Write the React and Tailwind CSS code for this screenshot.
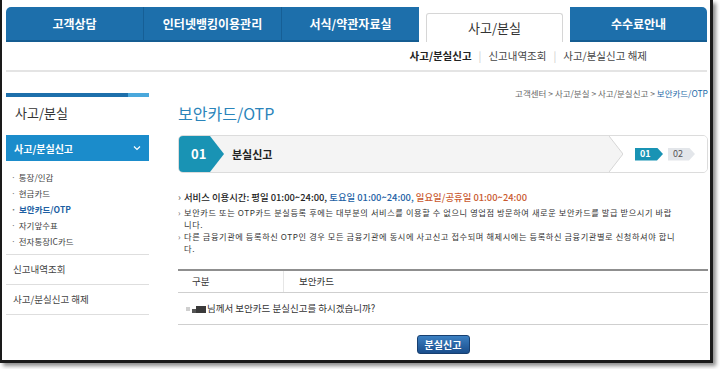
import React from "react";

const tabs = ["고객상담", "인터넷뱅킹이용관리", "서식/약관자료실", "사고/분실", "수수료안내"];
const subItems = ["통장/인감", "현금카드", "보안카드/OTP", "자기앞수표", "전자통장IC카드"];

const App = () => {
  return (
    <div className="w-[720px] h-[369px] bg-white overflow-hidden font-['Noto_Sans_CJK_KR',sans-serif] text-[#333]">
      <div className="w-[713px] h-[363px] bg-white border-l-2 border-r-[3px] border-b-[3px] border-[#1a1a1a] shadow-[3px_3px_4px_rgba(0,0,0,0.45)]">
        {/* top tabs */}
        <div className="ml-[4px] mr-[3px] pt-[7px]">
          <div className="flex h-[35px]">
            {tabs.map((t, i) =>
              t === "사고/분실" ? (
                <div key={t} className="flex-1 bg-white px-[7px] pt-[6px]">
                  <div className="h-full border border-b-0 border-[#d6d6d6] rounded-t-[3px] flex items-center justify-center text-[13px] text-[#333]">
                    {t}
                  </div>
                </div>
              ) : (
                <div
                  key={t}
                  className={`flex-1 flex items-center justify-center bg-[#1d6fab] border-b-2 border-[#155d92] text-white text-[12px] font-semibold ${
                    i === 0 ? "rounded-tl-[5px]" : ""
                  } ${i === tabs.length - 1 ? "rounded-tr-[5px]" : ""} ${
                    i < 2 ? "border-r border-r-[#165f96]" : ""
                  }`}
                >
                  {t}
                </div>
              )
            )}
          </div>

          {/* sub nav */}
          <div className="h-[30px] flex items-center justify-end pr-[60px] border-b-2 border-[#e4e4e4] text-[10.5px] text-[#444]">
            <span className="font-bold text-[#222]">사고/분실신고</span>
            <span className="mx-[7px] text-[#ccc]">|</span>
            <span>신고내역조회</span>
            <span className="mx-[7px] text-[#ccc]">|</span>
            <span>사고/분실신고 해제</span>
          </div>
        </div>

        <div className="flex">
          {/* sidebar */}
          <div className="w-[143px] ml-[4px] mt-[21px]">
            <div className="flex h-[4px]">
              <div className="w-[122px] bg-[#1d6fab]"></div>
              <div className="flex-1 bg-[#4aa8dc]"></div>
            </div>
            <div className="mt-[6px] h-[20px] leading-[20px] pl-[9px] text-[13px] text-[#333]">사고/분실</div>
            <div className="mt-[12px] h-[26px] bg-[#1b8ccb] flex items-center justify-between pl-[8px] pr-[8px] text-white text-[10px] font-bold">
              <span>사고/분실신고</span>
              <svg width="8" height="6" viewBox="0 0 8 6">
                <polyline points="1,1.5 4,4.5 7,1.5" fill="none" stroke="white" strokeWidth="1.2" />
              </svg>
            </div>
            <div className="mt-[8px] pl-[5px] pb-[5px] border-b border-[#dedede]">
              {subItems.map((s) => (
                <div
                  key={s}
                  className={`h-[16px] flex items-center text-[8.5px] ${
                    s === "보안카드/OTP" ? "text-[#1e5fa3] font-bold" : "text-[#444]"
                  }`}
                >
                  <span className="text-[#777] mr-[3px]">·</span>
                  {s}
                </div>
              ))}
            </div>
            <div className="h-[30px] flex items-center pl-[7px] border-b border-[#dedede] text-[9.5px] text-[#444]">신고내역조회</div>
            <div className="h-[30px] flex items-center pl-[7px] border-b border-[#dedede] text-[9.5px] text-[#444]">사고/분실신고 해제</div>
          </div>

          {/* main */}
          <div className="w-[530px] ml-[29px] mt-[15px]">
            <div className="h-[12px] leading-[12px] text-right text-[8.5px] text-[#666] whitespace-nowrap">
              고객센터 &gt; 사고/분실 &gt; 사고/분실신고 &gt; <span className="text-[#1e6aa8]">보안카드/OTP</span>
            </div>
            <div className="mt-[3px] h-[22px] leading-[22px] text-[16px] text-[#2a84ba]">보안카드/OTP</div>

            {/* step box */}
            <div className="mt-[11px] h-[38px] flex rounded-[5px] border border-[#dcdcdc] bg-[#f4f4f4] overflow-hidden">
              <div className="w-[45px] h-full bg-[#1993b4] [clip-path:polygon(0_0,31px_0,45px_50%,31px_100%,0_100%)] flex items-center pl-[12px] text-white text-[13px] font-semibold">
                01
              </div>
              <div className="flex-1 flex items-center pl-[8px] text-[11px] font-bold text-[#222]">분실신고</div>
              <svg width="14" height="36" viewBox="0 0 14 36" preserveAspectRatio="none" className="bg-white">
                <polygon points="0,0 14,18 0,36" fill="#f4f4f4" />
                <polyline points="0,0 14,18 0,36" fill="none" stroke="#d6d6d6" strokeWidth="1" />
              </svg>
              <div className="w-[84px] bg-white flex items-center pl-[12px] gap-[5px]">
                <div className="w-[28px] h-[13px] bg-[#1993b4] [clip-path:polygon(0_0,22px_0,28px_50%,22px_100%,0_100%)] flex items-center pl-[5px] text-white text-[9px] font-semibold">
                  01
                </div>
                <div className="w-[27px] h-[13px] bg-[#e3e6ea] [clip-path:polygon(0_0,21px_0,27px_50%,21px_100%,0_100%)] flex items-center pl-[5px] text-[#555] text-[9px]">
                  02
                </div>
              </div>
            </div>

            {/* notes */}
            <div className="mt-[18px] h-[12px] leading-[12px] text-[9.4px] font-medium whitespace-nowrap">
              <span className="text-[#666] mr-[3px]">›</span>
              <span className="text-[#222]">서비스 이용시간: 평일 01:00~24:00, </span>
              <span className="text-[#1c5fa5]">토요일 01:00~24:00, </span>
              <span className="text-[#c9592e]">일요일/공휴일 01:00~24:00</span>
            </div>
            <div className="mt-[3px] text-[8.2px] leading-[12px] tracking-[0.6px] text-[#333] whitespace-nowrap">
              <div className="flex">
                <span className="text-[#666] mr-[3px]">›</span>
                <div>
                  보안카드 또는 OTP카드 분실등록 후에는 대부분의 서비스를 이용할 수 없으니 영업점 방문하여 새로운 보안카드를 발급 받으시기 바랍
                  <br />
                  니다.
                </div>
              </div>
              <div className="flex">
                <span className="text-[#666] mr-[3px]">›</span>
                <div>
                  다른 금융기관에 등록하신 OTP인 경우 모든 금융기관에 동시에 사고신고 접수되며 해제시에는 등록하신 금융기관별로 신청하셔야 합니
                  <br />
                  다.
                </div>
              </div>
            </div>

            {/* table */}
            <div className="mt-[15px] border-t-2 border-[#8f8f8f] text-[9.5px] text-[#333]">
              <div className="h-[22px] flex border-b border-[#cfcfcf]">
                <div className="w-[105px] flex items-center pl-[14px]">구분</div>
                <div className="flex-1 flex items-center pl-[15px] border-l border-[#e6e6e6]">보안카드</div>
              </div>
              <div className="h-[32px] flex items-center pl-[8px] border-b border-[#cfcfcf]">
                <span className="w-[4px] h-[4px] bg-[#cfcfcf] mr-[2px]"></span>
                <span className="flex items-end h-[8px] mr-[1px]">
                  <span className="w-[4px] h-[4px] bg-[#555]"></span>
                  <span className="w-[10px] h-[7px] bg-[#3a3a3a]"></span>
                </span>
                님께서 보안카드 분실신고를 하시겠습니까?
              </div>
            </div>
            <div className="mt-[10px] flex justify-center">
              <div className="w-[53px] h-[19px] rounded-[3px] bg-linear-to-b from-[#3c80c2] to-[#1a4e8c] border border-[#173f70] text-white text-[10px] font-bold flex items-center justify-center">
                분실신고
              </div>
            </div>
          </div>
        </div>
      </div>
    </div>
  );
};

export default App;
